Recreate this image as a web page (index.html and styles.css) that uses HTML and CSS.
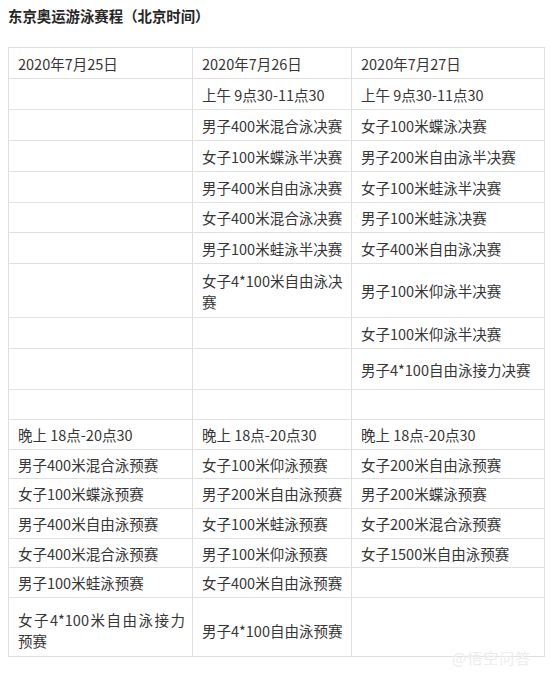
FILE: index.html
```html
<!DOCTYPE html>
<html lang="zh-CN">
<head>
<meta charset="utf-8">
<title>东京奥运游泳赛程</title>
<link rel="stylesheet" href="styles.css">
</head>
<body>
<main class="page">
  <h1 class="title">东京奥运游泳赛程（北京时间）</h1>
  <table class="schedule">
    <colgroup>
      <col class="c1"><col class="c2"><col class="c3">
    </colgroup>
    <tbody>
      <tr class="h31"><td>2020年7月25日</td><td>2020年7月26日</td><td>2020年7月27日</td></tr>
      <tr class="h31"><td></td><td>上午 9点30-11点30</td><td>上午 9点30-11点30</td></tr>
      <tr class="h31"><td></td><td>男子400米混合泳决赛</td><td>女子100米蝶泳决赛</td></tr>
      <tr class="h31"><td></td><td>女子100米蝶泳半决赛</td><td>男子200米自由泳半决赛</td></tr>
      <tr class="h31"><td></td><td>男子400米自由泳决赛</td><td>女子100米蛙泳半决赛</td></tr>
      <tr class="h30"><td></td><td>女子400米混合泳决赛</td><td>男子100米蛙泳决赛</td></tr>
      <tr class="h31"><td></td><td>男子100米蛙泳半决赛</td><td>女子400米自由泳决赛</td></tr>
      <tr class="h54"><td></td><td>女子4*100米自由泳决<br>赛</td><td>男子100米仰泳半决赛</td></tr>
      <tr class="h31"><td></td><td></td><td>女子100米仰泳半决赛</td></tr>
      <tr class="h41"><td></td><td></td><td>男子4*100自由泳接力决赛</td></tr>
      <tr class="h30"><td></td><td></td><td></td></tr>
      <tr class="h30"><td>晚上 18点-20点30</td><td>晚上 18点-20点30</td><td>晚上 18点-20点30</td></tr>
      <tr class="h29"><td>男子400米混合泳预赛</td><td>女子100米仰泳预赛</td><td>女子200米自由泳预赛</td></tr>
      <tr class="h30"><td>女子100米蝶泳预赛</td><td>男子200米自由泳预赛</td><td>男子200米蝶泳预赛</td></tr>
      <tr class="h30"><td>男子400米自由泳预赛</td><td>女子100米蛙泳预赛</td><td>女子200米混合泳预赛</td></tr>
      <tr class="h29"><td>女子400米混合泳预赛</td><td>男子100米仰泳预赛</td><td>女子1500米自由泳预赛</td></tr>
      <tr class="h30"><td>男子100米蛙泳预赛</td><td>女子400米自由泳预赛</td><td></td></tr>
      <tr class="h59 low"><td><span class="spread">女子4*100米自由泳接力</span>预赛</td><td>男子4*100自由泳预赛</td><td></td></tr>
    </tbody>
  </table>
  <div class="watermark">@悟空问答</div>
</main>
</body>
</html>
```

FILE: styles.css
```css
html, body {
  margin: 0;
  padding: 0;
  background: #ffffff;
}

body {
  font-family: "Noto Sans CJK SC", "Noto Sans", sans-serif;
  color: #333333;
}

.page {
  position: relative;
  width: 550px;
  height: 676px;
  padding: 5px 0 0 8px;
  box-sizing: border-box;
  overflow: hidden;
}

.title {
  margin: 0 0 21px 0;
  font-size: 14.4px;
  line-height: 21px;
  font-weight: 600;
  color: #262626;
}

.schedule {
  width: 536px;
  table-layout: fixed;
  border-collapse: collapse;
  font-size: 14.5px;
  line-height: 21px;
}

.c1 { width: 184px; }
.c2 { width: 159px; }
.c3 { width: 193px; }

.schedule td {
  border: 1px solid #e0e0e0;
  padding: 0 7px 0 9px;
  vertical-align: middle;
  text-align: justify;
  color: #363636;
  word-break: break-all;
}

.h29 { height: 29px; }
.h30 { height: 30px; }
.h31 { height: 31px; }
.h41 { height: 41px; }
.h54 { height: 54px; }
.h59 { height: 59px; }

.low td {
  padding-top: 6px;
}

.spread {
  display: block;
  text-align: justify;
  text-align-last: justify;
}

.watermark {
  position: absolute;
  left: 452px;
  top: 648px;
  font-size: 15px;
  line-height: 20px;
  color: #ececec;
  text-shadow: 0 0 1px #ffffff;
  letter-spacing: 1px;
}
```
